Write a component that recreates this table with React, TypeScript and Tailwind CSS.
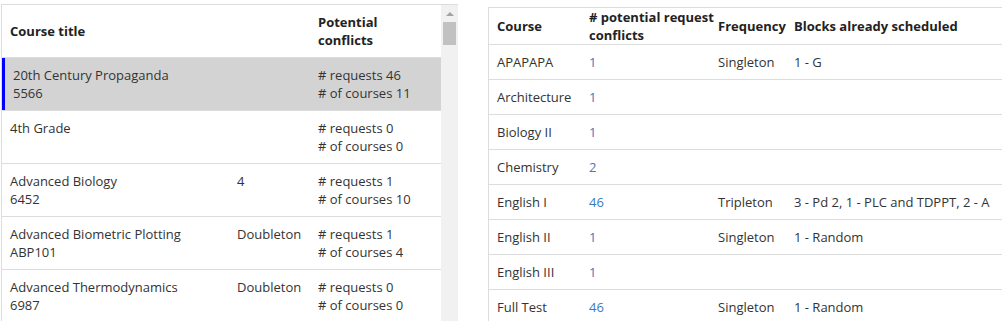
import React from "react";

type LeftRow = { title: string; code?: string; freq?: string; requests: number; courses: number };

const leftRows: LeftRow[] = [
  { title: "20th Century Propaganda", code: "5566", requests: 46, courses: 11 },
  { title: "4th Grade", requests: 0, courses: 0 },
  { title: "Advanced Biology", code: "6452", freq: "4", requests: 1, courses: 10 },
  { title: "Advanced Biometric Plotting", code: "ABP101", freq: "Doubleton", requests: 1, courses: 4 },
  { title: "Advanced Thermodynamics", code: "6987", freq: "Doubleton", requests: 0, courses: 0 },
];

type RightRow = { course: string; conflicts: number; freq?: string; blocks?: string };

const rightRows: RightRow[] = [
  { course: "APAPAPA", conflicts: 1, freq: "Singleton", blocks: "1 - G" },
  { course: "Architecture", conflicts: 1 },
  { course: "Biology II", conflicts: 1 },
  { course: "Chemistry", conflicts: 2 },
  { course: "English I", conflicts: 46, freq: "Tripleton", blocks: "3 - Pd 2, 1 - PLC and TDPPT, 2 - A" },
  { course: "English II", conflicts: 1, freq: "Singleton", blocks: "1 - Random" },
  { course: "English III", conflicts: 1 },
  { course: "Full Test", conflicts: 46, freq: "Singleton", blocks: "1 - Random" },
];

const leftGrid = "grid grid-cols-[227px_81px_1fr]";
const rightGrid = "grid grid-cols-[92px_129px_76px_1fr]";

export default function App() {
  return (
    <main
      className="flex h-[321px] overflow-hidden bg-white text-[13px] leading-[18px] text-[#333]"
      style={{ fontFamily: '"Open Sans", "Noto Sans", Arial, sans-serif' }}
    >
      {/* course list */}
      <section className="mt-[4px] ml-[1px] flex w-[457px] shrink-0 border-t border-l border-[#ddd]">
        <div className="w-[439px]">
          <div className={`${leftGrid} py-2 font-bold text-[#222]`}>
            <div className="flex items-center pl-2">Course title</div>
            <div />
            <div className="pl-2">
              Potential
              <br />
              conflicts
            </div>
          </div>
          {leftRows.map((r, i) => {
            const selected = i === 0;
            return (
              <div
                key={r.title}
                className={`${leftGrid} border-t border-[#ddd] ${selected ? "bg-[#d3d3d3]" : ""}`}
              >
                <div className={`py-2 pl-2 ${selected ? "border-l-[3px] border-[#0000ff]" : ""}`}>
                  <div>{r.title}</div>
                  <div className="h-[18px]">{r.code}</div>
                </div>
                <div className="py-2 pl-2">{r.freq}</div>
                <div className="py-2 pl-2">
                  <div># requests {r.requests}</div>
                  <div># of courses {r.courses}</div>
                </div>
              </div>
            );
          })}
        </div>
        {/* scrollbar */}
        <div className="flex w-[17px] flex-col items-center bg-[#f1f1f1]">
          <div className="mt-[7px] h-0 w-0 border-x-[4px] border-b-[4px] border-x-transparent border-b-[#a3a3a3]" />
          <div className="mt-[6px] h-[23px] w-[13px] bg-[#c1c1c1]" />
        </div>
      </section>

      {/* conflicts table */}
      <section className="mt-[7px] ml-[30px] flex-1 border-t border-l border-[#ddd]">
        <div className={`${rightGrid} items-center font-bold text-[#222]`}>
          <div className="pl-2">Course</div>
          <div className="whitespace-nowrap pl-2">
            # potential request
            <br />
            conflicts
          </div>
          <div className="pl-2">Frequency</div>
          <div className="whitespace-nowrap pl-2">Blocks already scheduled</div>
        </div>
        {rightRows.map((r) => (
          <div key={r.course} className={`${rightGrid} border-t border-[#ddd] py-2`}>
            <div className="pl-2">{r.course}</div>
            <div className="pl-2 text-[#3a7bc0]">{r.conflicts}</div>
            <div className="pl-2">{r.freq}</div>
            <div className="whitespace-nowrap pl-2">{r.blocks}</div>
          </div>
        ))}
      </section>
    </main>
  );
}
